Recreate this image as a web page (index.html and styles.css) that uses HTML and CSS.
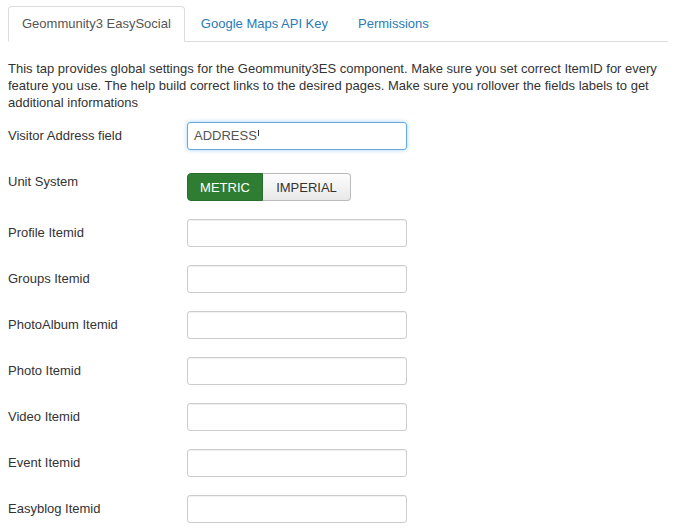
FILE: index.html
```html
<!DOCTYPE html>
<html>
<head>
<meta charset="utf-8">
<link rel="stylesheet" href="styles.css">
</head>
<body>
<div class="page">
  <ul class="tabs">
    <li class="tab active"><a>Geommunity3 EasySocial</a></li>
    <li class="tab"><a>Google Maps API Key</a></li>
    <li class="tab"><a>Permissions</a></li>
  </ul>
  <p class="desc">This tap provides global settings for the Geommunity3ES component. Make sure you set correct ItemID for every feature you use. The help build correct links to the desired pages. Make sure you rollover the fields labels to get additional informations</p>
  <div class="form">
    <div class="row first">
      <label class="lbl">Visitor Address field</label>
      <div class="input focus">ADDRESS<span class="caret"></span></div>
    </div>
    <div class="row">
      <label class="lbl top">Unit System</label>
      <div class="btn-group">
        <span class="btn on">METRIC</span><span class="btn off">IMPERIAL</span>
      </div>
    </div>
    <div class="row"><label class="lbl">Profile Itemid</label><div class="input"></div></div>
    <div class="row"><label class="lbl">Groups Itemid</label><div class="input"></div></div>
    <div class="row"><label class="lbl">PhotoAlbum Itemid</label><div class="input"></div></div>
    <div class="row"><label class="lbl">Photo Itemid</label><div class="input"></div></div>
    <div class="row"><label class="lbl">Video Itemid</label><div class="input"></div></div>
    <div class="row"><label class="lbl">Event Itemid</label><div class="input"></div></div>
    <div class="row"><label class="lbl">Easyblog Itemid</label><div class="input"></div></div>
  </div>
</div>
</body>
</html>
```
FILE: styles.css
```css
html, body { margin: 0; padding: 0; background: #fff; }
body { font-family: "Liberation Sans", Arial, sans-serif; font-size: 13px; color: #333; }
.page { padding: 6px 11px 0 8px; }
.tabs { list-style: none; margin: 0 0 18px; padding: 0; display: flex; border-bottom: 1px solid #ddd; }
.tab { margin-bottom: -1px; margin-right: 2px; }
.tab a { display: block; padding: 8px 13px; line-height: 18px; border: 1px solid transparent; border-radius: 4px 4px 0 0; color: #2a7ab8; }
.tab.active a { color: #555; background: #fff; border-color: #ddd #ddd transparent; }
.desc { margin: 0 0 11px; line-height: 17px; }
.row { display: flex; margin-bottom: 18px; }
.row.first { margin-bottom: 23px; }
.lbl { width: 179px; padding-top: 5px; line-height: 18px; }
.lbl.top { padding-top: 0; }
.input { box-sizing: border-box; width: 220px; height: 28px; border: 1px solid #ccc; border-radius: 3px; padding: 4px 6px; line-height: 18px; color: #555; box-shadow: inset 0 1px 1px rgba(0,0,0,0.06); }
.input.focus { border-color: #6aa8e0; box-shadow: 0 0 4px rgba(82,168,236,0.5); }
.caret { display: inline-block; width: 1px; height: 6px; background: #333; vertical-align: 4px; margin-left: 1px; }
.btn-group { display: flex; }
.btn { box-sizing: border-box; height: 28px; line-height: 18px; padding: 5px 12px; font-size: 13px; border: 1px solid #bbb; text-align: center; }
.btn.on { background: #2f7d32; border-color: #2a6e2d; color: #fff; border-radius: 4px 0 0 4px; width: 76px; }
.btn.off { background: linear-gradient(#fdfdfd, #e8e8e8); border-left: 0; color: #333; border-radius: 0 4px 4px 0; width: 88px; }
```
